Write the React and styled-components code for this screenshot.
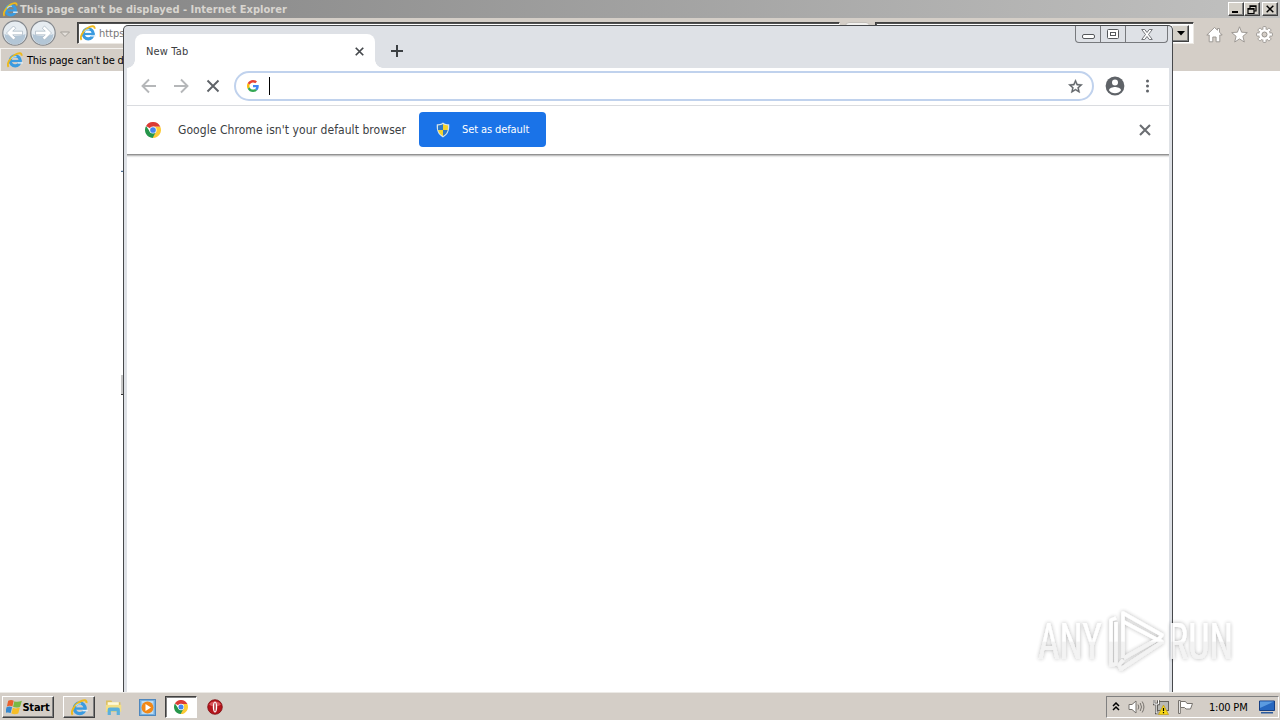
import React from 'react'
import styled, { createGlobalStyle } from 'styled-components'

const GlobalStyle = createGlobalStyle`
    * {
        box-sizing: border-box;
    }
    body {
        margin: 0;
        overflow: hidden;
        font-family: 'DejaVu Sans Condensed', 'DejaVu Sans', sans-serif;
        font-stretch: condensed;
        font-size: 11px;
        color: #000;
    }
    svg {
        display: block;
        flex: none;
    }
`
const Desktop = styled.div`
    position: relative;
    width: 1280px;
    height: 720px;
    overflow: hidden;
    display: flex;
    flex-direction: column;
    background: #fff;
`
const Label = styled.span`
    white-space: nowrap;
    font-size: ${p => p.$size || 11}px;
    font-weight: ${p => p.$weight || 400};
    letter-spacing: ${p => p.$spacing || 0}px;
    color: ${p => p.$color || '#000'};
`

/* Internet Explorer */
const TitleBar = styled.div`
    height: 18px;
    padding: 0 2px 0 3px;
    display: flex;
    align-items: center;
    gap: 2px;
    background: linear-gradient(90deg, #828282, #c1c1c0);
`
const Spacer = styled.div`
    flex: 1;
`
const CaptionButton = styled.div`
    width: 16px;
    height: 14px;
    margin-left: ${p => p.$gap || 0}px;
    display: flex;
    align-items: center;
    justify-content: center;
    background: #d4d0c8;
    border: 1px solid;
    border-color: #fff #404040 #404040 #fff;
    box-shadow: inset -1px -1px #808080;
`
const CaptionGroup = styled.div`
    display: flex;
`
const NavBar = styled.div`
    height: 30px;
    padding: 4px 7px 0 2px;
    display: flex;
    align-items: flex-start;
    background: #d4cec7;
`
const NavButtons = styled.div`
    display: flex;
    gap: 2px;
    margin-top: -2px;
    width: 75px;
`
const AddressField = styled.div`
    width: ${p => p.$width}px;
    height: 22px;
    padding: 0 3px 0 2px;
    display: flex;
    align-items: center;
    gap: 3px;
    background: #fff;
    border: 1px solid;
    border-color: #404040 #ece9e4 #ece9e4 #404040;
    box-shadow: inset 1px 1px #505050;
`
const RefreshSlot = styled.div`
    width: 35px;
    height: 22px;
    padding: 0 5px;
    background: #d4cec7;
`
const RefreshButton = styled.div`
    height: 21px;
    background: #f2f1ef;
    border: 1px solid #c3bfba;
    border-radius: 4px;
`
const DropButton = styled.div`
    width: 17px;
    height: 17px;
    margin: 0 1px 0 auto;
    display: flex;
    align-items: center;
    justify-content: center;
    background: #d4d0c8;
    border: 1px solid;
    border-color: #eee #404040 #404040 #eee;
    box-shadow: inset -1px -1px #808080;
`
const NavTools = styled.div`
    display: flex;
    gap: 8px;
    margin: 4px 0 0 12px;
`
const TabRow = styled.div`
    height: 23px;
    display: flex;
    background: #d4cec7;
`
const PageTab = styled.div`
    width: 124px;
    overflow: hidden;
    padding-left: 6px;
    display: flex;
    align-items: center;
    gap: 4px;
    border: 1px solid #f4f2ef;
    border-width: 1px 0 0 1px;
`
const Page = styled.div`
    flex: 1;
    background: #fff;
`
const PageMark = styled.div`
    position: absolute;
    left: 121px;
    top: ${p => p.$top}px;
    width: 3px;
    height: ${p => p.$height}px;
    background: ${p => p.$color};
    border-bottom: 1px solid ${p => p.$edge};
`

/* Chrome */
const ChromeWindow = styled.div`
    position: absolute;
    left: 123px;
    top: 25px;
    width: 1050px;
    height: 667px;
    padding: 0 3px;
    display: flex;
    flex-direction: column;
    background: #dee1e6;
    border: 1px solid #46484b;
    border-bottom: 0;
    border-radius: 5px 5px 0 0;
`
const TabStrip = styled.div`
    height: 42px;
    padding-left: 8px;
    display: flex;
    align-items: flex-start;
`
const ChromeTab = styled.div`
    position: relative;
    width: 240px;
    height: 34px;
    margin-top: 8px;
    padding: 0 11px 0 11px;
    display: flex;
    align-items: center;
    justify-content: space-between;
    background: #fff;
    border-radius: 8px 8px 0 0;
    &:before,
    &:after {
        content: '';
        position: absolute;
        bottom: 0;
        width: 8px;
        height: 8px;
    }
    &:before {
        left: -8px;
        background: radial-gradient(circle at 0 0, transparent 7.5px, #fff 8px);
    }
    &:after {
        right: -8px;
        background: radial-gradient(circle at 100% 0, transparent 7.5px, #fff 8px);
    }
`
const NewTabButton = styled.div`
    margin: 18px 0 0 15px;
`
const WindowButtons = styled.div`
    height: 17px;
    margin-left: auto;
    display: flex;
    border: 1px solid #77797d;
    border-top: 0;
    border-radius: 0 0 4px 4px;
    margin-right: 1px;
`
const WindowButton = styled.div`
    width: ${p => p.$width}px;
    display: flex;
    align-items: center;
    justify-content: center;
    border-left: ${p => (p.$first ? 0 : '1px solid #77797d')};
`
const Toolbar = styled.div`
    height: 38px;
    padding: 0 13px 1px 13px;
    display: flex;
    align-items: center;
    background: #fff;
    border-bottom: 1px solid #dadce0;
`
const ToolbarButtons = styled.div`
    width: 94px;
    display: flex;
    gap: 14px;
`
const Omnibox = styled.div`
    width: 860px;
    height: 30px;
    padding: 0 8px 0 11px;
    display: flex;
    align-items: center;
    border: 2px solid #c0d2ed;
    border-radius: 15px;
`
const Caret = styled.div`
    width: 1px;
    height: 18px;
    margin: 0 auto 0 10px;
    background: #000;
`
const ToolbarEnd = styled.div`
    margin-left: 11px;
    display: flex;
    align-items: center;
    gap: 21px;
`
const InfoBar = styled.div`
    position: relative;
    height: 48px;
    padding: 0 18px 0 18px;
    display: flex;
    align-items: center;
    background: #fff;
    box-shadow: 0 1px 0 #929292, 0 2px 0 #c2c2c2, 0 3px 1px #e8e8e8;
`
const InfoText = styled.div`
    width: 241px;
    margin-left: 17px;
    line-height: 16px;
`
const DefaultButton = styled.div`
    width: 127px;
    height: 35px;
    margin-top: -1px;
    padding-left: 17px;
    display: flex;
    align-items: center;
    gap: 12px;
    background: #1a73e8;
    border-radius: 4px;
`
const ChromePage = styled.div`
    flex: 1;
    background: #fff;
`

/* Taskbar */
const Taskbar = styled.div`
    height: 28px;
    padding: 2px 0 1px 2px;
    display: flex;
    align-items: center;
    background: #d4cec7;
    border-top: 1px solid #eceae6;
`
const TaskButton = styled.div`
    width: ${p => p.$width || 32}px;
    height: 22px;
    margin-right: ${p => p.$after || 0}px;
    display: flex;
    align-items: center;
    justify-content: center;
    border: 1px solid transparent;
    ${p => p.$look === 'raised' && `
        border-color: #fff #404040 #404040 #fff;
        box-shadow: inset -1px -1px #808080;
    `}
    ${p => p.$look === 'pressed' && `
        background: #fff;
        border-color: #404040 #fff #fff #404040;
        box-shadow: inset 1px 1px #808080;
    `}
`
const Tray = styled.div`
    height: 22px;
    width: 173px;
    margin: 0 1px 0 auto;
    padding: 0 2px 0 5px;
    display: flex;
    align-items: center;
    gap: 8px;
    border: 1px solid;
    border-color: #808080 #fff #fff #808080;
`
const Clock = styled.div`
    width: 41px;
    margin: 0 1px 0 7px;
`
const Watermark = styled.div`
    position: absolute;
    left: 1030px;
    top: 602px;
`

const IeIcon = ({ size = 16 }) => (
  <svg width={size} height={size} viewBox="0 0 16 16">
    <circle cx="8.200" cy="8.800" r="5" fill="none" stroke="#3a9be0" strokeWidth="3.200" />
    <path d="M4 9h10.500" stroke="#3a9be0" strokeWidth="2.200" />
    <path d="M10.800 10.200h5v1.400h-5z" fill="#e4f1fa" />
    <path d="M1.600 14.800C-.6 12.500 2.600 6 8 2.800c3.600-2.200 7.200-2.200 6.500.9" fill="none" stroke="#eeb91c" strokeWidth="1.900" />
    <path d="M4.500 6.800C5.500 4.900 7.500 4.300 9.500 4.700" fill="none" stroke="#a9dcf8" strokeWidth="1.200" />
  </svg>
)

const RoundArrow = ({ flip }) => (
  <svg width="26" height="26" viewBox="0 0 26 26">
    <circle cx="13" cy="13" r="12.200" fill="#e6ecf1" stroke="#85898e" strokeWidth="1.200" />
    <path d="M2.500 14a10.500 10.500 0 0 0 21 0c-5 2.500-16 2.500-21 0z" fill="#b3c6d6" />
    <path
      d="M4.500 13l7-7 2.200 2.200-3 3H20.500v3.600h-9.800l3 3-2.200 2.200z"
      fill="#fff"
      stroke="#a5b3c0"
      strokeWidth=".7"
      transform={flip ? 'translate(26 0) scale(-1 1)' : undefined}
    />
  </svg>
)

const Cross = ({ size, color, width }) => (
  <svg width={size} height={size} viewBox="0 0 12 12">
    <path d="M1 1l10 10M11 1L1 11" stroke={color} strokeWidth={width} />
  </svg>
)

const Arrow = ({ flip }) => (
  <svg width="18" height="18" viewBox="0 0 18 18">
    <path
      d="M16 9H3M9 2.500L2.500 9 9 15.500"
      fill="none"
      stroke="#b5b7b9"
      strokeWidth="1.900"
      transform={flip ? 'translate(18 0) scale(-1 1)' : undefined}
    />
  </svg>
)

const GoogleIcon = () => (
  <svg width="12" height="12" viewBox="0 0 48 48">
    <path fill="#ea4335" d="M24 9.500c3.540 0 6.710 1.220 9.210 3.600l6.850-6.850C35.900 2.380 30.470 0 24 0 14.620 0 6.510 5.380 2.560 13.220l7.980 6.190C12.430 13.720 17.740 9.500 24 9.500z" />
    <path fill="#4285f4" d="M46.980 24.550c0-1.570-.15-3.090-.38-4.550H24v9.020h12.940c-.58 2.960-2.260 5.480-4.780 7.180l7.730 6c4.510-4.180 7.090-10.360 7.090-17.650z" />
    <path fill="#fbbc05" d="M10.530 28.590c-.48-1.450-.76-2.990-.76-4.590s.27-3.140.76-4.590l-7.980-6.190C.92 16.460 0 20.120 0 24c0 3.880.92 7.540 2.560 10.780z" />
    <path fill="#34a853" d="M24 48c6.480 0 11.930-2.130 15.890-5.810l-7.730-6c-2.150 1.450-4.920 2.300-8.160 2.300-6.260 0-11.570-4.220-13.470-9.910l-7.980 6.190C6.510 42.620 14.620 48 24 48z" />
  </svg>
)

const ChromeIcon = ({ size = 16 }) => (
  <svg width={size} height={size} viewBox="0 0 48 48">
    <path d="M24 24L3.200 12A24 24 0 0 1 44.800 12L46 14H24z" fill="#db3b35" />
    <path d="M24 24V14h21.800A24 24 0 0 1 24 48l-2-1 10-18z" fill="#fccb35" />
    <path d="M24 24l9 5-10 19A24 24 0 0 1 3.200 12L15 29z" fill="#26964b" />
    <circle cx="24" cy="24" r="10.800" fill="#fff" />
    <circle cx="24" cy="24" r="8.600" fill="#4385ef" />
  </svg>
)

const ShieldIcon = () => (
  <svg width="14" height="16" viewBox="0 0 14 16">
    <path d="M7 .5C9 2 11 2.300 13.200 2.300c.5 6-1.200 10.500-6.200 13.200C2 12.800.3 8.300.8 2.300 3 2.300 5 2 7 .5z" fill="#d9e5e8" />
    <path d="M7 2C5.500 3 4 3.400 2 3.500V8h5z" fill="#2d79c7" />
    <path d="M7 2c1.500 1 3 1.400 5 1.500 0 2 0 3-.3 4.500H7z" fill="#f4d32d" />
    <path d="M2.200 8H7v6C4.300 12.500 2.700 10.500 2.200 8z" fill="#f4d32d" />
    <path d="M7 8h4.700c-.5 2.500-2 4.500-4.700 6z" fill="#2d79c7" />
  </svg>
)

const Star = () => (
  <svg width="17" height="17" viewBox="0 0 24 24">
    <path
      fill="#5f6368"
      stroke="#5f6368"
      strokeWidth=".5"
      d="M22 9.240l-7.190-.62L12 2 9.190 8.630 2 9.240l5.460 4.730L5.820 21 12 17.270 18.180 21l-1.630-7.030L22 9.240zM12 15.400l-3.760 2.270 1-4.280-3.320-2.880 4.380-.38L12 6.100l1.710 4.040 4.380.38-3.320 2.880 1 4.280L12 15.400z"
    />
  </svg>
)

const Avatar = () => (
  <svg width="20" height="20" viewBox="0 0 20 20">
    <circle cx="10" cy="10" r="9.400" fill="#5f6368" />
    <circle cx="10" cy="6.600" r="3" fill="#fff" />
    <path d="M4 14.200c0-2.200 4-3.300 6-3.300s6 1.100 6 3.300c-1.200 1.800-3.500 3-6 3s-4.800-1.200-6-3z" fill="#fff" />
  </svg>
)

const Dots = () => (
  <svg width="4" height="14" viewBox="0 0 4 14">
    <circle cx="1.500" cy="2" r="1.500" fill="#5f6368" />
    <circle cx="1.500" cy="7" r="1.500" fill="#5f6368" />
    <circle cx="1.500" cy="12" r="1.500" fill="#5f6368" />
  </svg>
)

const gearTeeth = [0, 45, 90, 135, 180, 225, 270, 315]

const ToolIcons = () => (
  <>
    <svg width="17" height="17" viewBox="0 0 17 17">
      <path d="M8.500 1.500L.8 9h2.400v6.800h3.600V11h3.300v4.800h3.700V9h2.400L13.500 6.200V2.500h-2v1.700z" fill="#fff" stroke="#96928d" strokeWidth=".9" />
    </svg>
    <svg width="17" height="17" viewBox="0 0 17 17">
      <path d="M8.500.8l2.100 5.400 5.700.4-4.400 3.700 1.400 5.700-4.800-3.100L3.700 16l1.400-5.700L.7 6.600l5.700-.4z" fill="#fff" stroke="#96928d" strokeWidth=".9" />
    </svg>
    <svg width="17" height="17" viewBox="0 0 17 17">
      {gearTeeth.map(a => (
        <rect key={a} x="6.900" y=".6" width="3.200" height="4" rx=".6" fill="#fff" stroke="#96928d" strokeWidth=".9" transform={`rotate(${a} 8.500 8.500)`} />
      ))}
      <circle cx="8.500" cy="8.500" r="5.300" fill="#fff" />
      <circle cx="8.500" cy="8.500" r="2.500" fill="#d4cec7" stroke="#96928d" />
    </svg>
  </>
)

const WindowsFlag = () => (
  <svg width="16" height="16" viewBox="1 1.500 14.500 13.500">
    <path d="M3 2.500c2-1 3.500-.8 5 0L6.800 7.700c-1.600-.9-3-.9-5 0z" fill="#e8602c" />
    <path d="M8.600 3c1.700.9 4 .8 6.800-.4l-1.600 5.400c-2.200 1-4.400 1-6.400.1z" fill="#79b843" />
    <path d="M1.500 8.400c2-.9 3.400-.8 5 .1l-1.300 5.300c-1.500-.9-3-.9-5 0z" fill="#3688cf" />
    <path d="M7.200 8.900c1.800.9 4 .8 6.400-.1l-1.500 5.300c-2.200.9-4.200.9-6.200 0z" fill="#f6bd27" />
  </svg>
)

const FolderIcon = () => (
  <svg width="17" height="17" viewBox="0 0 16 16">
    <path d="M1 1.500h5l1 1.500h7.500V12H1z" fill="#dcc060" />
    <path d="M2.500 3h10.500v3H2.500z" fill="#fff9d8" />
    <path d="M.8 5.500h14.500V12H.8z" fill="#f3df86" />
    <path d="M2.500 15V10q0-2 2-2h7.500q2 0 2 2v5h-3v-3.500H5.500V15z" fill="#5bb0dc" />
  </svg>
)

const PlayerIcon = () => (
  <svg width="17" height="17" viewBox="0 0 17 17">
    <rect x=".5" y=".5" width="16" height="16" fill="#72aee0" stroke="#4f87bd" />
    <rect x="2.500" y="2" width="12" height="13" fill="#bddcf3" />
    <circle cx="8.500" cy="8.500" r="6" fill="#f18817" />
    <path d="M6.500 5l5.500 3.500-5.500 3.500z" fill="#fff" />
  </svg>
)

const OperaIcon = () => (
  <svg width="16" height="16" viewBox="0 0 16 16">
    <circle cx="8" cy="8" r="7.300" fill="#b5141b" stroke="#7c0e12" strokeWidth=".8" />
    <path d="M2 5.500a6.500 5 0 0 1 12 0C11 8 5 8 2 5.500z" fill="#d9555a" />
    <ellipse cx="8" cy="8" rx="2.200" ry="5.500" fill="#fff" />
    <ellipse cx="8" cy="8" rx=".7" ry="4.500" fill="#a51218" />
  </svg>
)

const TrayIcons = () => (
  <>
    <svg width="8" height="10" viewBox="0 0 8 10">
      <path d="M1 4L4 1l3 3M1 8l3-3 3 3" fill="none" stroke="#000" strokeWidth="1.500" />
    </svg>
    <svg width="17" height="16" viewBox="0 0 17 16">
      <path d="M1 5.500h3L8 2v12l-4-3.500H1z" fill="#fff" stroke="#77736e" />
      <path d="M10 5.500q1.600 2.500 0 5M12.200 4q2.600 4 0 8M14.200 2.500q3.500 5.500 0 11" fill="none" stroke="#77736e" />
    </svg>
    <svg width="16" height="16" viewBox="0 0 16 16">
      <rect x="4.500" y="2.500" width="11" height="9" fill="#b9b9b5" stroke="#66645f" />
      <path d="M1 1v4h4.500V1M3.200 5v9h3" fill="none" stroke="#55534f" strokeWidth="2.400" />
      <path d="M1 1v4h4.500V1M3.200 5v9h3" fill="none" stroke="#fff" strokeWidth="1" />
      <path d="M10.500 6l5 9.500h-10z" fill="#f7d817" stroke="#bd9a12" strokeWidth=".7" />
      <path d="M10.500 9v3M10.500 13v1.300" stroke="#000" strokeWidth="1.200" />
    </svg>
    <svg width="17" height="16" viewBox="0 0 17 16">
      <path d="M1.500 1.500h1.800v13H1.500z" fill="#fff" stroke="#77736e" />
      <path d="M3.500 2.500h5L10 4.500h5.500L13.500 10H9L7.500 8.500h-4z" fill="#fff" stroke="#77736e" />
    </svg>
  </>
)

const LogoText = styled.text`
    font-family: Roboto, sans-serif;
    font-size: 50px;
`

const AnyRunLogo = () => (
  <svg width="212" height="78" viewBox="0 0 212 78" overflow="visible">
    <defs>
      <linearGradient id="logoFill" gradientUnits="userSpaceOnUse" x1="0" y1="0" x2="0" y2="78">
        <stop offset=".5" stopColor="#fff" />
        <stop offset=".52" stopColor="#f1f1f1" />
      </linearGradient>
      <filter id="logoShadow" x="-10%" y="-10%" width="120%" height="120%">
        <feDropShadow dx="0" dy="0" stdDeviation="1.900" floodColor="#000" floodOpacity=".36" />
      </filter>
    </defs>
    <g fill="url(#logoFill)" filter="url(#logoShadow)" opacity=".85">
      <LogoText x="8" y="57" textLength="64" lengthAdjust="spacingAndGlyphs">ANY</LogoText>
      <LogoText x="138" y="57" textLength="65" lengthAdjust="spacingAndGlyphs">RUN</LogoText>
      <g fill="none" stroke="url(#logoFill)" strokeWidth="3.500" strokeLinejoin="round">
        <path d="M86 16l-5 2v45l5-1V20" />
        <path d="M93 56V11l39 22-4 5-34-18" />
        <path d="M94 56l34-19 4 3-41 27-2-4 4-5" />
      </g>
    </g>
  </svg>
)

const InternetExplorer = () => (
  <>
    <TitleBar>
      <IeIcon size={15} />
      <Label $weight={700} $color="#d8d5cf" $spacing={0.02}>This page can't be displayed - Internet Explorer</Label>
      <Spacer />
      <CaptionGroup>
        <CaptionButton>
          <svg width="8" height="8"><path d="M0 6h6v2H0z" /></svg>
        </CaptionButton>
        <CaptionButton>
          <svg width="10" height="9"><path d="M3 3V.8h6V6H7M3 1.500h6M1 3.500h6v5H1zM1 4.200h6" fill="none" stroke="#000" strokeWidth="1.200" /></svg>
        </CaptionButton>
        <CaptionButton $gap={2}><Cross size={8} color="#000" width={2.2} /></CaptionButton>
      </CaptionGroup>
    </TitleBar>
    <NavBar>
      <NavButtons>
        <RoundArrow />
        <RoundArrow flip />
        <svg width="12" height="26"><path d="M2.500 12h9L7 16.500z" fill="#e4e0db" stroke="#a39f99" /></svg>
      </NavButtons>
      <AddressField $width={764}>
        <IeIcon />
        <Label $color="#777">https://</Label>
      </AddressField>
      <RefreshSlot><RefreshButton /></RefreshSlot>
      <AddressField $width={319}>
        <DropButton>
          <svg width="8" height="5"><path d="M0 0h8L4 4.500z" /></svg>
        </DropButton>
      </AddressField>
      <NavTools><ToolIcons /></NavTools>
    </NavBar>
    <TabRow>
      <PageTab>
        <IeIcon />
        <Label $spacing={-0.2}>This page can't be displayed</Label>
      </PageTab>
    </TabRow>
    <Page />
    <PageMark $top={170} $height={2} $color="#d6e2ee" $edge="#4f6f96" />
    <PageMark $top={375} $height={20} $color="#c8c8c8" $edge="#333" />
  </>
)

const Chrome = () => (
  <ChromeWindow>
    <TabStrip>
      <ChromeTab>
        <Label $color="#3c4043" $spacing={0.15}>New Tab</Label>
        <Cross size={9} color="#45484c" width={2.3} />
      </ChromeTab>
      <NewTabButton>
        <svg width="14" height="14"><path d="M7 1v12M1 7h12" stroke="#3c4043" strokeWidth="2" /></svg>
      </NewTabButton>
      <WindowButtons>
        <WindowButton $width={24} $first>
          <svg width="13" height="9"><rect x=".5" y="4.500" width="12" height="4" rx="1.500" fill="#fff" stroke="#55585c" /></svg>
        </WindowButton>
        <WindowButton $width={25}>
          <svg width="12" height="10"><rect x=".5" y=".5" width="11" height="9" rx="1" fill="#fff" stroke="#55585c" /><rect x="3.500" y="3.500" width="5" height="3" fill="#fff" stroke="#55585c" /></svg>
        </WindowButton>
        <WindowButton $width={42}>
          <svg width="12" height="11"><path d="M.7.5h3L6 3.500 8.300.5h3L7.500 5.500l3.800 5h-3L6 7.500l-2.300 3h-3l3.800-5z" fill="#fff" stroke="#66696d" strokeWidth=".9" /></svg>
        </WindowButton>
      </WindowButtons>
    </TabStrip>
    <Toolbar>
      <ToolbarButtons>
        <Arrow />
        <Arrow flip />
        <svg width="18" height="18"><path d="M3.500 3.500l11 11M14.500 3.500l-11 11" stroke="#5f6368" strokeWidth="1.900" /></svg>
      </ToolbarButtons>
      <Omnibox>
        <GoogleIcon />
        <Caret />
        <Star />
      </Omnibox>
      <ToolbarEnd>
        <Avatar />
        <Dots />
      </ToolbarEnd>
    </Toolbar>
    <InfoBar>
      <ChromeIcon />
      <InfoText><Label $size={12} $color="#3c4043" $spacing={0.06}>Google Chrome isn't your default browser</Label></InfoText>
      <DefaultButton>
        <ShieldIcon />
        <Label $color="#fff" $spacing={-0.1}>Set as default</Label>
      </DefaultButton>
      <Spacer />
      <Cross size={12} color="#6b6e72" width={2.1} />
    </InfoBar>
    <ChromePage />
  </ChromeWindow>
)

const App = () => {
  return (
    <>
      <GlobalStyle />
      <Desktop>
        <InternetExplorer />
        <Chrome />
        <Taskbar>
          <TaskButton $width={52} $after={9} $look="raised">
            <WindowsFlag />
            <Label $weight={700} $spacing={-0.2}>Start</Label>
          </TaskButton>
          <TaskButton $after={2} $look="raised"><IeIcon size={17} /></TaskButton>
          <TaskButton $after={2}><FolderIcon /></TaskButton>
          <TaskButton $after={2}><PlayerIcon /></TaskButton>
          <TaskButton $after={2} $look="pressed"><ChromeIcon size={14} /></TaskButton>
          <TaskButton><OperaIcon /></TaskButton>
          <Tray>
            <TrayIcons />
            <Clock><Label $spacing={-0.2}>1:00 PM</Label></Clock>
            <svg width="16" height="14" viewBox="0 0 16 14">
              <path d="M.5 1h15v9.500H.5z" fill="#2768c0" stroke="#163f83" />
              <path d="M1 1.500h14L1 8z" fill="#5b9be0" />
              <path d="M2 12h12v1.500H2z" fill="#2b5a9c" />
            </svg>
          </Tray>
        </Taskbar>
        <Watermark><AnyRunLogo /></Watermark>
      </Desktop>
    </>
  )
}

export default App
